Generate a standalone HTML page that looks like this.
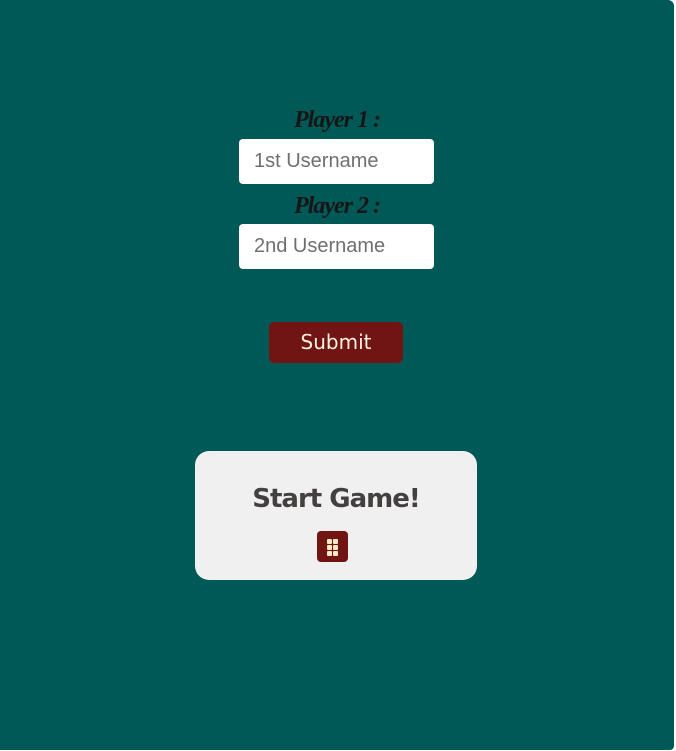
<!DOCTYPE html>
<html><head><style>
html,body{margin:0;padding:0;background:#fff;width:676px;height:751px;overflow:hidden}
.bg{position:absolute;left:0;top:0;width:674px;height:750px;background:#005956;border-radius:0 6px 4px 0}
.lbl{position:absolute;left:0;width:674px;text-align:center;font-family:"Liberation Serif",serif;font-style:italic;font-weight:bold;font-size:24px;color:#161616;letter-spacing:-1px}
.inp{position:absolute;left:239px;width:195px;height:45px;background:#fff;border-radius:4px;font-family:"Liberation Sans",sans-serif;font-size:20px;color:#6f6f6f;line-height:45px;box-sizing:border-box;padding-left:15px}
.btn{position:absolute;left:269px;top:322px;width:134px;height:41px;background:#711414;border-radius:5px;color:#fff3e0;font-family:"DejaVu Sans","Liberation Sans",sans-serif;font-size:20px;text-align:center;line-height:40px}
.card{position:absolute;left:195px;top:451px;width:282px;height:129px;background:#f0f0f0;border-radius:14px}
.title{position:absolute;left:0;top:33px;width:282px;text-align:center;font-family:"DejaVu Sans","Liberation Sans",sans-serif;font-weight:bold;font-size:26px;color:#444040;letter-spacing:-1px}
.ic{position:absolute;left:122px;top:80px;width:31px;height:31px;background:#711414;border-radius:4px}
.ic i{position:absolute;width:5px;height:5px;background:#ffe9c6;border-radius:1px}
</style></head><body>
<div class="bg"></div>
<div class="lbl" style="top:107px">Player 1 :</div>
<div class="inp" style="top:139px">1st Username</div>
<div class="lbl" style="top:193px">Player 2 :</div>
<div class="inp" style="top:224px">2nd Username</div>
<div class="btn">Submit</div>
<div class="card"><div class="title">Start Game!</div>
<div class="ic"><i style="left:10px;top:8px"></i><i style="left:16px;top:8px"></i><i style="left:10px;top:14px"></i><i style="left:16px;top:14px"></i><i style="left:10px;top:20px"></i><i style="left:16px;top:20px"></i></div></div>
</body></html>
